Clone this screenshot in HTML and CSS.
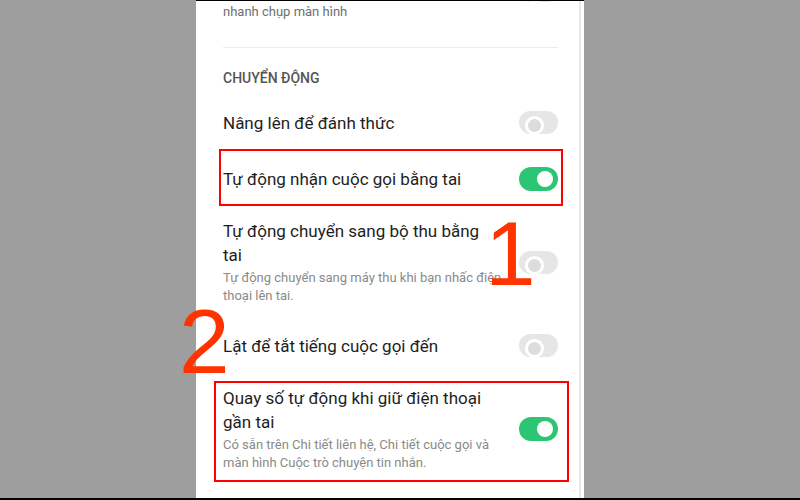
FILE: index.html
```html
<!DOCTYPE html>
<html lang="vi">
<head>
<meta charset="utf-8">
<title>Chuyển động</title>
<link rel="stylesheet" href="styles.css">
</head>
<body>
<div class="screen">
  <div class="stage">
    <div class="phone">
      <div class="list">
        <div class="row row--top">
          <div class="text">
            <div class="title">Chụp màn hình ba ngón tay</div>
            <div class="sub">Vuốt xuống bằng ba ngón tay để chụp ảnh<br>nhanh chụp màn hình</div>
          </div>
          <span class="toggle"></span>
        </div>
        <div class="divider"></div>
        <div class="section-title">CHUYỂN ĐỘNG</div>

        <div class="row">
          <div class="text"><div class="title">Nâng lên để đánh thức</div></div>
          <span class="toggle"></span>
        </div>
        <div class="row">
          <div class="text"><div class="title">Tự động nhận cuộc gọi bằng tai</div></div>
          <span class="toggle toggle--on"></span>
        </div>
        <div class="row">
          <div class="text">
            <div class="title">Tự động chuyển sang bộ thu bằng tai</div>
            <div class="sub">Tự động chuyển sang máy thu khi bạn nhấc điện thoại lên tai.</div>
          </div>
          <span class="toggle"></span>
        </div>
        <div class="row">
          <div class="text"><div class="title">Lật để tắt tiếng cuộc gọi đến</div></div>
          <span class="toggle"></span>
        </div>
        <div class="row">
          <div class="text">
            <div class="title">Quay số tự động khi giữ điện thoại gần tai</div>
            <div class="sub">Có sẵn trên Chi tiết liên hệ, Chi tiết cuộc gọi và màn hình Cuộc trò chuyện tin nhắn.</div>
          </div>
          <span class="toggle toggle--on"></span>
        </div>
      </div>
      <div class="scrollbar"></div>
    </div>

    <div class="mark mark--one"></div>
    <div class="mark mark--two"></div>
    <div class="num num--one">1</div>
    <div class="num num--two">2</div>
  </div>
  <div class="bottom-line"></div>
</div>
</body>
</html>
```

FILE: styles.css
```css
* { box-sizing: border-box; }

html, body {
  margin: 0;
  padding: 0;
}

body {
  width: 800px;
  height: 500px;
  overflow: hidden;
  background: #9e9e9e;
  font-family: Roboto, "Noto Sans", "Liberation Sans", sans-serif;
}

.screen {
  display: flex;
  flex-direction: column;
  height: 500px;
}

.stage {
  position: relative;
  height: 498px;
  padding-left: 196px;
  overflow: hidden;
  background: #9e9e9e;
}

.bottom-line {
  height: 2px;
  background: #000;
}

.phone {
  display: flex;
  width: 388px;
  height: 100%;
  background: #fff;
  border-top: 1px solid #000;
}

.list {
  flex: 1;
  padding: 0 21px 0 27px;
  overflow: hidden;
}

.scrollbar {
  width: 2px;
  margin-right: 3px;
  background: #e9e9e9;
}

.row {
  display: flex;
  align-items: center;
  min-height: 56px;
  padding: 13px 0 12px;
}

.row--top {
  margin-top: -55px;
}

.text {
  width: 280px;
}

.title {
  max-width: 263px;
  font-size: 17px;
  line-height: 24px;
  color: #1e1e1e;
}

.sub {
  margin-top: 2px;
  font-size: 13px;
  line-height: 18px;
  color: #8a8a8a;
}

.row--top .sub {
  color: #6e6e6e;
}

.divider {
  height: 1px;
  margin-top: 14px;
  background: #ececec;
}

.section-title {
  margin: 20px 0 6px;
  font-size: 14px;
  line-height: 20px;
  font-weight: 500;
  color: #555;
}

.toggle {
  position: relative;
  flex: none;
  width: 39px;
  height: 23px;
  margin-left: auto;
  border-radius: 12px;
  background: #e6e6e6;
}

.toggle::after {
  content: "";
  position: absolute;
  left: 6px;
  top: 5px;
  width: 13px;
  height: 13px;
  border-radius: 50%;
  border: 3px solid #fff;
  background: #dcdcdc;
}

.toggle--on {
  height: 24px;
  background: #2bc573;
}

.toggle--on::after {
  left: auto;
  right: 5px;
  top: 4px;
  width: 16px;
  height: 16px;
  border: none;
  background: #fff;
}

.mark {
  position: absolute;
  border: 2px solid #f00;
}

.mark--one {
  left: 219px;
  top: 149px;
  width: 344px;
  height: 57px;
}

.mark--two {
  left: 214px;
  top: 381px;
  width: 355px;
  height: 101px;
}

.num {
  position: absolute;
  font-family: "Liberation Sans", Arial, sans-serif;
  font-size: 91px;
  line-height: 1;
  color: #ff3300;
}

.num--one {
  left: 485px;
  top: 208px;
}

.num--two {
  left: 179px;
  top: 296px;
}
```
